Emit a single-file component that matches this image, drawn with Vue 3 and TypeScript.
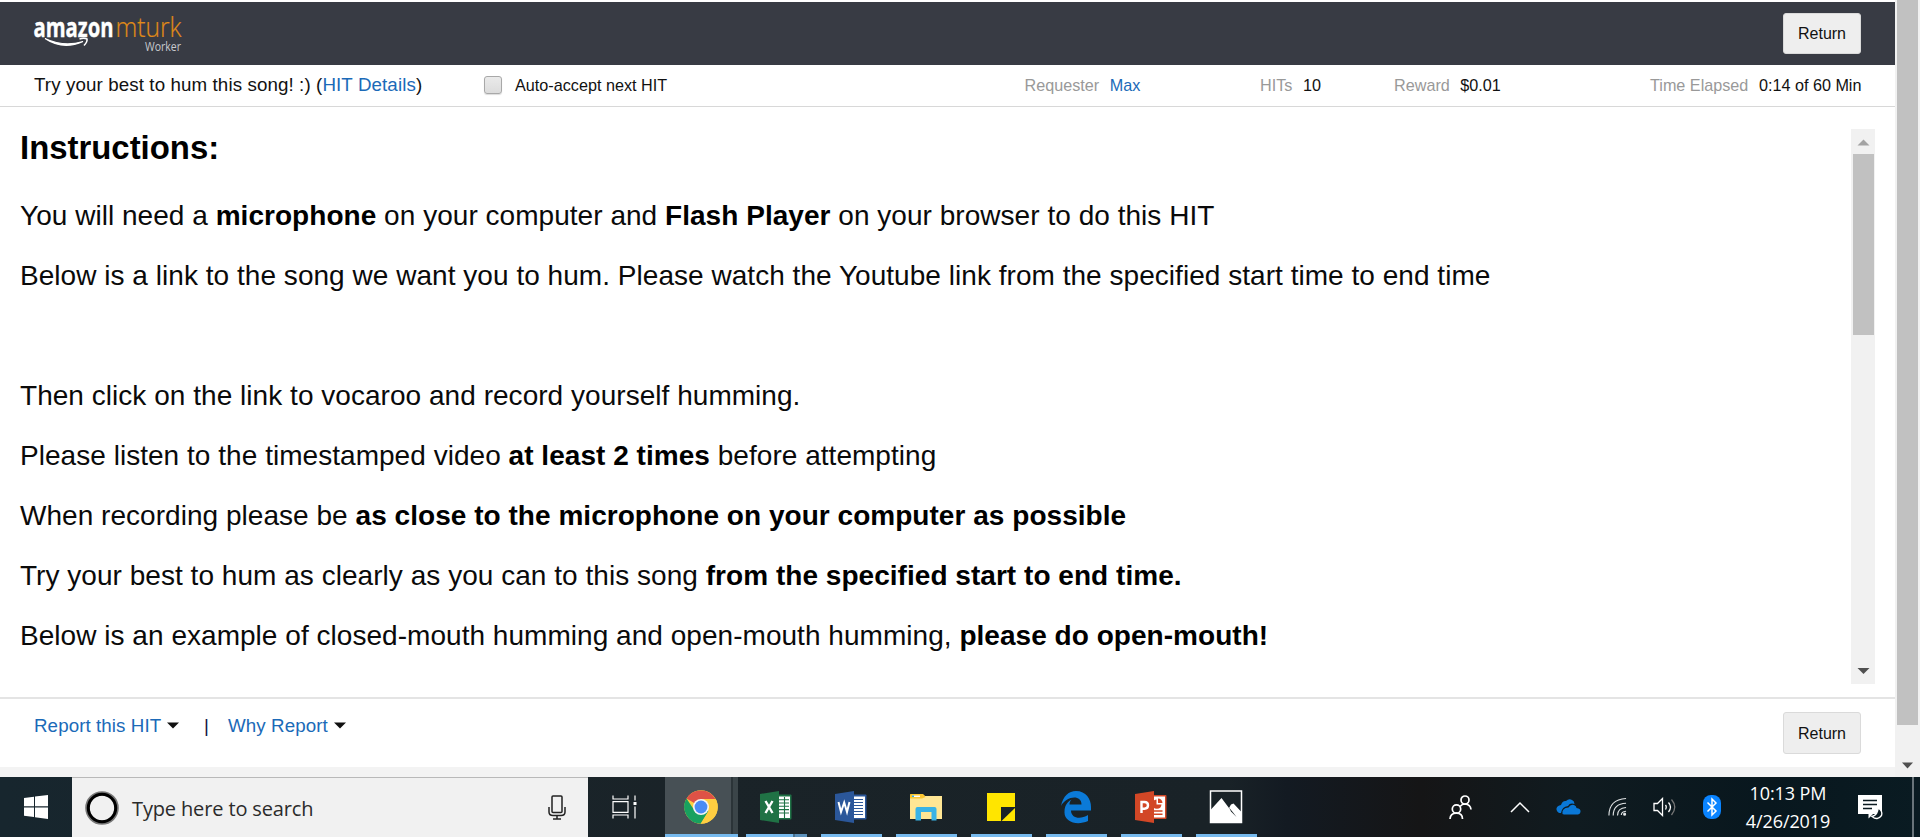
<script setup lang="ts">
interface Run { text: string; bold?: boolean }

const lines: Run[][] = [
  [{ text: 'You will need a ' }, { text: 'microphone', bold: true }, { text: ' on your computer and ' }, { text: 'Flash Player', bold: true }, { text: ' on your browser to do this HIT' }],
  [{ text: 'Below is a link to the song we want you to hum. Please watch the Youtube link from the specified start time to end time' }],
  [],
  [{ text: 'Then click on the link to vocaroo and record yourself humming.' }],
  [{ text: 'Please listen to the timestamped video ' }, { text: 'at least 2 times', bold: true }, { text: ' before attempting' }],
  [{ text: 'When recording please be ' }, { text: 'as close to the microphone on your computer as possible', bold: true }],
  [{ text: 'Try your best to hum as clearly as you can to this song ' }, { text: 'from the specified start to end time.', bold: true }],
  [{ text: 'Below is an example of closed-mouth humming and open-mouth humming, ' }, { text: 'please do open-mouth!', bold: true }],
]

const apps = ['chrome', 'excel', 'word', 'explorer', 'notes', 'edge', 'powerpoint', 'photos']
</script>

<template>
  <div class="screen">
    <div class="browser">
      <div class="page">
        <header class="top">
          <svg class="logo" width="160" height="52" viewBox="0 0 160 52">
            <text class="lg-amazon" x="-0.5" y="24.500" textLength="80" lengthAdjust="spacingAndGlyphs">amazon</text>
            <text class="lg-mturk" x="81.500" y="24.500" textLength="66" lengthAdjust="spacingAndGlyphs">mturk</text>
            <text class="lg-worker" x="111" y="39" textLength="36" lengthAdjust="spacingAndGlyphs">Worker</text>
            <path d="M11 26.500Q29 38.500 49 29.500Q30 35.500 11 26.500Z" fill="#fff" stroke="#fff" stroke-width="1.200" />
            <path d="M45.500 27Q50 25.500 53 27Q53.500 30 50 33.500" fill="none" stroke="#fff" stroke-width="1.600" />
          </svg>
          <button class="btn">Return</button>
        </header>

        <div class="info">
          <span class="title">Try your best to hum this song! :) (<a>HIT Details</a>)</span>
          <span class="check"></span>
          <span class="auto">Auto-accept next HIT</span>
          <span class="stat requester"><i>Requester</i><a>Max</a></span>
          <span class="stat hits"><i>HITs</i><b>10</b></span>
          <span class="stat reward"><i>Reward</i><b>$0.01</b></span>
          <span class="stat time"><i>Time Elapsed</i><b>0:14 of 60 Min</b></span>
        </div>

        <main class="task">
          <div class="text">
            <h1>Instructions:</h1>
            <p v-for="(line, n) in lines" :key="n">
              <span v-for="(r, k) in line" :key="k" :class="{ strong: r.bold }">{{ r.text }}</span>
            </p>
          </div>
          <div class="inner-scroll">
            <svg class="up" width="24" height="25"><path d="M6.500 16.500h12l-6-6z" fill="#a3a3a3" /></svg>
            <div class="inner-thumb"></div>
            <svg class="down" width="24" height="25"><path d="M6.500 9h12l-6 6z" fill="#505050" /></svg>
          </div>
        </main>

        <footer class="foot">
          <div class="links">
            <a class="report">Report this HIT</a><svg class="caret" width="12" height="7"><path d="M0 0.500h12l-6 6z" fill="#111" /></svg>
            <span class="bar">|</span>
            <a class="why">Why Report</a><svg class="caret" width="12" height="7"><path d="M0 0.500h12l-6 6z" fill="#111" /></svg>
          </div>
          <button class="btn">Return</button>
        </footer>
        <div class="strip"></div>
      </div>
      <div class="outer-scroll">
        <div class="outer-thumb"></div>
        <svg width="25" height="22"><path d="M7 7.500h11l-5.500 6z" fill="#505050" /></svg>
      </div>
    </div>

    <div class="taskbar">
      <div class="start">
        <svg width="24" height="24" viewBox="0 0 24 24" fill="#fff"><path d="M0 3L10 1.700V11.300H0zM11 1.500L24 0V11.300H11zM0 12.500H10V22L0 20.700zM11 12.500H24V24L11 22.300z" /></svg>
      </div>
      <div class="search">
        <svg class="cortana" width="34" height="34"><circle cx="17" cy="17" r="14.600" fill="none" stroke="#777" stroke-width="4.400" /><circle cx="17" cy="17" r="13.700" fill="none" stroke="#000" stroke-width="3" /></svg>
        <span class="placeholder">Type here to search</span>
        <svg class="mic" width="18" height="25" viewBox="0 0 18 25" fill="none" stroke="#222" stroke-width="1.500"><rect x="4" y="1" width="10" height="16.500" rx="1" /><path d="M1 12V17Q1 20.500 5 20.500H13Q17 20.500 17 17V12M9 20.500V24M5 24H13" /></svg>
      </div>
      <div class="taskview">
        <svg width="26" height="24" viewBox="0 0 26 24" fill="none" stroke="#fff" stroke-width="1.200"><path d="M1 .5V4H16V.5M1 23.500V20H16V23.500M1 6.700H16V17.300H1zM23 .5V5.500M23 11.500V23.500" /><path d="M21.500 7h3v3h-3z" fill="#fff" stroke="none" /></svg>
      </div>

      <div class="apps">
        <div v-for="a in apps" :key="a" class="app" :class="a">
          <svg width="34" height="34" viewBox="0 0 34 34">
            <template v-if="a === 'chrome'">
              <circle cx="17" cy="17" r="16.700" fill="#ffce41" />
              <path d="M17 17L2.500 8.600A16.700 16.700 0 0 1 31.500 9H17z" fill="#de5246" />
              <path d="M2.500 8.600A16.700 16.700 0 0 0 17 33.700L24.500 21L17 17L9.500 19z" fill="#18a15f" />
              <path d="M16.500 33.700L24.400 21.200A8.500 8.500 0 0 0 24 9.300H31.900A16.700 16.700 0 0 1 16.500 33.700z" fill="#ffce41" />
              <circle cx="17" cy="17" r="8" fill="#f4f4f4" /><circle cx="17" cy="17" r="6.400" fill="#4a8bf5" />
            </template>
            <template v-else-if="a === 'excel'">
              <rect x="17" y="4.500" width="15.500" height="25" rx="1" fill="#1e7145" />
              <path d="M20 6.500h11v21.500H20z" fill="#fff" />
              <path d="M20 9.700H30M20 13H30M20 16.300H30M20 19.600H30M20 23H30M25.500 7V28" stroke="#1e7145" stroke-width="1.100" />
              <path d="M1 4L20 1V33L1 30z" fill="#207245" />
              <path d="M6.500 11L13.500 23M13.500 11L6.500 23" stroke="#fff" stroke-width="2.400" />
            </template>
            <template v-else-if="a === 'word'">
              <rect x="17" y="4.500" width="15.500" height="25" rx="1" fill="#2b579a" />
              <path d="M20 6.500h11v21.500H20z" fill="#fff" />
              <path d="M20 9.500H29M20 12.500H29M20 15.500H29M20 18.500H29M20 21.500H29M20 24.500H29" stroke="#2b579a" stroke-width="1.200" />
              <path d="M1 4L20 1V33L1 30z" fill="#2b579a" />
              <path d="M4.500 12L7 22L10.200 12.500L13 22L15.500 12" fill="none" stroke="#fff" stroke-width="2" />
            </template>
            <template v-else-if="a === 'explorer'">
              <path d="M1 5.500Q1 4 2.500 4H13.500L16 6H33V29H1z" fill="#ffe694" />
              <path d="M1 9V5Q1 4 2 4H14L16.500 7L13 8.500H1z" fill="#fdc62f" /><path d="M3 6.300h8" stroke="#fff" stroke-width="1.500" /><path d="M3 6.300h2" stroke="#36b3e3" stroke-width="1.500" />
              <path d="M6.500 30.500V19Q6.500 17 8.500 17H25.500Q27.500 17 27.500 19V30.500H22.500V22H12V30.500z" fill="#39b3e6" />
            </template>
            <template v-else-if="a === 'notes'">
              <path d="M3 3h28v14H17v14H3z" fill="#ffe500" /><path d="M31 18v13H17.500z" fill="#ffe500" />
            </template>
            <template v-else-if="a === 'edge'">
              <path d="M2 16C4 6 10 1 17 1C27 1 32 9 32 17V20.500H12C12 28 21 30 29 25V31C18 36 5 32 5.500 22C5.500 16 8 12 12.500 9.500C11 11 10.500 13 10.500 14.500H22.500C22.500 4 7 6 2 16Z" fill="#0b7ad8" />
            </template>
            <template v-else-if="a === 'powerpoint'">
              <rect x="17" y="5" width="15.500" height="24" rx="1" fill="#d24726" /><path d="M20 6.500h11v21H20z" fill="#fff" />
              <path d="M22.500 9.500A4.600 4.600 0 1 0 27.500 14.500H22.500zM24 8.500v4.500h4.500A4.500 4.500 0 0 0 24 8.500M20 20.200h8.500v1.500H20zM20 23.500h8.500v1.500H20z" fill="#d24726" />
              <path d="M1 4L20 1V33L1 30z" fill="#d24726" />
              <path d="M7.500 23V12H10.500Q14 12 14 15.300T10.500 18.700H7.500" fill="none" stroke="#fff" stroke-width="2.400" />
            </template>
            <template v-else>
              <path d="M1.500 1H32.500V32.500H1.500z" fill="none" stroke="#fff" stroke-width="1.500" />
              <path d="M1.500 20L12.500 8L20 18L22 14.500L24.500 13.500L32.500 22V33H1.500z" fill="#fff" /><path d="M20 17.500L24.500 23L27.500 27L22 21.500z" fill="#1a2226" />
            </template>
          </svg>
        </div>
      </div>

      <div class="tray">
        <svg class="people" width="23" height="24" viewBox="0 0 23 24" fill="none" stroke="#fff" stroke-width="1.700"><circle cx="16" cy="5" r="4" /><circle cx="7.500" cy="14" r="4.200" /><path d="M1 24Q1.500 18 7.500 18.200T13.500 24M11 11.500Q13 9 16 9Q21.500 9.500 22 14.500" /></svg>
        <svg class="chevron" width="20" height="12" fill="none" stroke="#fff" stroke-width="1.500"><path d="M1 11L10 2L19 11" /></svg>
        <svg class="cloud" width="25" height="16" viewBox="0 0 25 16"><path d="M5 14H3Q0 12 .5 9.500Q1 6.500 5 6Q6.500 1.500 10 2Q13-1 16 1Q18.500 2 18.500 5Q14 3.500 12 7Q6 7.500 5 14Z" fill="#0a78d7" /><path d="M6.500 15Q5.500 9 12.500 8.500Q14.500 5 18 6Q20.500 7 20.500 9Q25 9.500 24.500 13Q24 15 22 15.500H8Z" fill="#0a78d7" /></svg>
        <svg class="wifi" width="19" height="20" viewBox="0 0 20 20" fill="none" stroke="#dfe2e3" stroke-width="1.200"><path d="M1 19Q1 2 19 1M5.500 19Q5.500 6.500 19 6M10 19Q10 11 19 10.500M14 18.500Q14 15 19 14.500" /><circle cx="17.500" cy="17.500" r="1" fill="#fff" /></svg>
        <svg class="sound" width="24" height="20" viewBox="0 0 24 20" fill="none" stroke="#fff" stroke-width="1.300"><path d="M1 6.500H4.500L9.500 1.500V18.500L4.500 13.500H1zM12.500 8Q14 10 12.500 12.500M15.500 5.500Q19.500 10 15.500 15" /><path d="M18.500 2.500Q25 10 18.500 18" stroke="#777" /></svg>
        <svg class="bluetooth" width="18" height="24" viewBox="0 0 18 24"><rect width="18" height="24" rx="8" fill="#0a84ff" /><path d="M4.500 7.500L13 16L9 20V4L13 8L4.500 16.500" fill="none" stroke="#fff" stroke-width="1.500" /></svg>
        <div class="clock"><span class="hour">10:13 PM</span><span class="date">4/26/2019</span></div>
        <svg class="action" width="25" height="25" viewBox="0 0 25 25"><path d="M0 0H24V19H15L10.500 23.500V19H0z" fill="#fff" /><path d="M5 5.500H19M5 9.500H19M5 13.500H14" stroke="#0b1a20" stroke-width="1.300" /><path d="M20 13Q25 16 23.500 20.500Q19.500 26 14 21.500Q20 20 20 13Z" fill="#0b1a20" stroke="#fff" stroke-width="1.300" /></svg>
        <div class="desktop"></div>
      </div>
    </div>
  </div>
</template>

<style>
body { margin: 0; overflow: hidden; }
</style>

<style scoped>
.screen { width: 1920px; height: 837px; display: flex; flex-direction: column; font-family: "Liberation Sans", Arial, sans-serif; color: #111; background: #fff; }
.browser { height: 777px; display: flex; }
.page { width: 1895px; display: flex; flex-direction: column; padding-top: 2px; box-sizing: border-box; }
.top { height: 63px; background: #383b44; display: flex; justify-content: space-between; box-sizing: border-box; padding: 11px 34px 0 34px; }
.logo { display: block; margin-top: -1px; overflow: visible; }
.logo text { font-family: "Open Sans", sans-serif; }
.logo .lg-amazon { font-weight: 700; font-size: 27px; fill: #fff; stroke: #fff; stroke-width: 0.4px; }
.logo .lg-mturk { font-weight: 300; font-size: 27px; fill: #e08b17; stroke: #e08b17; stroke-width: 0.2px; }
.logo .lg-worker { font-weight: 400; font-size: 12.500px; fill: #c8cacd; }
.btn { width: 78px; height: 42px; box-sizing: border-box; border: 1px solid #dadada; border-radius: 3px; background: #eee; font: 16px "Liberation Sans", Arial, sans-serif; color: #111; padding: 1px 0 0; }
.top .btn { height: 41px; padding: 0; }
a { color: #1b6ab8; }
.info { height: 42px; box-sizing: border-box; border-bottom: 1px solid #d8d8d8; padding-left: 34px; display: grid; grid-template-columns: 450px 31px 509.5px 235.5px 134px 256px 1fr; align-items: center; white-space: nowrap; }
.title { font-size: 18.75px; letter-spacing: 0.1px; padding-bottom: 2px; }
.check { width: 18px; height: 18px; box-sizing: border-box; border: 1.500px solid #a8a8a8; border-radius: 3px; background: linear-gradient(#eaeaea, #dcdcdc); box-shadow: 0 1px 1px #ddd; margin-bottom: 1px; }
.auto, .stat { font-size: 16.200px; }
.stat { display: flex; gap: 10.5px; }
.stat i { font-style: normal; color: #999; }
.stat b { font-weight: 400; }
.task { height: 590px; display: flex; justify-content: space-between; box-sizing: border-box; padding: 22px 20px 0 20px; }
h1 { font-size: 32.900px; line-height: 38px; margin: 0 0 33px; color: #000; }
p { font-size: 28px; letter-spacing: 0.036px; line-height: 32px; height: 32px; margin: 0 0 28px; white-space: pre; color: #0a0a0a; }
.strong { font-weight: 700; color: #000; }
.text { white-space: nowrap; }
.inner-scroll { width: 24px; height: 555px; background: #f1f1f1; display: flex; flex-direction: column; }
.inner-scroll svg, .outer-scroll svg { display: block; }
.inner-thumb { width: 21px; height: 181px; margin-left: 2px; background: #c1c1c1; }
.down { margin-top: auto; }
.foot { height: 70px; box-sizing: border-box; border-top: 2px solid #e4e4e4; display: flex; justify-content: space-between; padding: 13px 34px 0 34px; }
.links { display: flex; align-items: center; height: 27px; font-size: 18.75px; letter-spacing: 0.08px; white-space: nowrap; }
.report { width: 133px; }
.bar { margin: 0 19px 0 25px; width: 5px; color: #114; }
.why { width: 106px; }
.strip { height: 10px; background: #f3f3f3; }
.outer-scroll { width: 25px; background: #f1f1f1; display: flex; flex-direction: column; justify-content: space-between; }
.outer-thumb { width: 21px; height: 725px; margin-left: 2px; background: #c1c1c1; }
.taskbar { height: 60px; display: flex; background: linear-gradient(90deg, #17262e 0, #1a2328 35%, #192227 64%, #131a22 67%, #151516 74%, #101b20 82%, #08171e 92%, #0a1b22 100%); }
.start { width: 72px; display: flex; align-items: center; justify-content: center; }
.search { width: 516px; box-sizing: border-box; border-top: 1px solid #b9b9b9; background: #f1f1f1; display: flex; align-items: center; padding: 0 22px 0 13px; }
.placeholder { font-family: "Open Sans", "Noto Sans", sans-serif; font-size: 20px; letter-spacing: -0.14px; margin-left: 13px; padding-top: 2px; color: #2b2b2b; flex: 1; }
.taskview { width: 77px; display: flex; align-items: center; padding-left: 24px; box-sizing: border-box; }
.apps { display: flex; gap: 14px; }
.app { width: 61px; height: 60px; box-sizing: border-box; border-bottom: 3px solid #76b9ed; display: flex; align-items: center; justify-content: center; padding: 3px 2px 0 0; }
.chrome { width: 73px; margin-right: -6px; justify-content: flex-start; padding-left: 19px; background: linear-gradient(90deg, #475055 66px, #2b3438 66px 68px, #3b4549 68px); }
.excel { border-bottom: 0; background: linear-gradient(90deg, #76b9ed 47px, #4a718f 47px 49px, #5c91bb 49px) bottom / 100% 3px no-repeat; padding-bottom: 3px; }
.tray { flex: 1; display: flex; align-items: center; padding-left: 192px; }
.tray svg { display: block; flex: none; }
.chevron { margin-left: 38px; }
.cloud { margin-left: 26px; }
.wifi { margin-left: 27px; }
.sound { margin-left: 26px; }
.bluetooth { margin-left: 26px; }
.clock { width: 100px; margin-left: 17px; color: #fff; font: 18px/28px "Open Sans", "Noto Sans", sans-serif; letter-spacing: -0.1px; display: flex; flex-direction: column; align-items: center; white-space: nowrap; }
.action { margin-left: 20px; }
.desktop { width: 2px; height: 60px; margin-left: 29px; background: #69747a; }
</style>
